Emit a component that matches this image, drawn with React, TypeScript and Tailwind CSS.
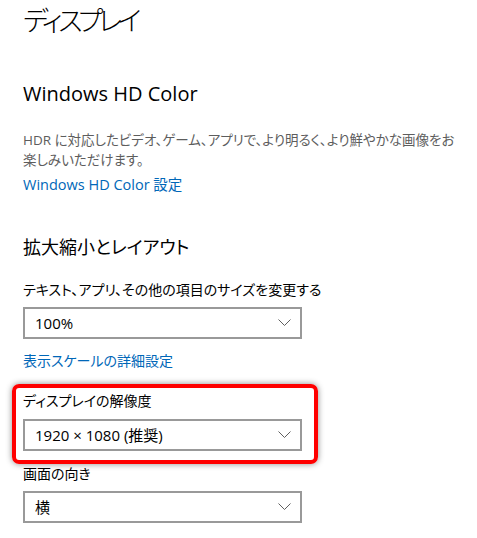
import React from "react";

const font = "font-['Open_Sans','Noto_Sans_CJK_JP',sans-serif] [font-feature-settings:'palt']";

function Chevron() {
  return (
    <svg width="13" height="8" viewBox="0 0 13 8" className="text-[#5f5f5f]">
      <polyline points="0.5,0.5 6.5,6.5 12.5,0.5" fill="none" stroke="currentColor" strokeWidth="1" />
    </svg>
  );
}

function Select({ value, className = "" }: { value: string; className?: string }) {
  return (
    <div
      className={`flex h-[32px] w-[279px] items-center justify-between border-2 border-[#999999] bg-white pl-[10px] pr-[9px] text-[15px] text-black ${className}`}
    >
      <span className="leading-[20px]">{value}</span>
      <Chevron />
    </div>
  );
}

export default function App() {
  return (
    <div className={`min-h-screen bg-white px-[23px] ${font}`}>
      {/* Page title */}
      <h1 className="text-[27px] font-light leading-[42px] tracking-[-4.5px] text-black">ディスプレイ</h1>

      {/* HDR */}
      <h2 className="mt-[38px] text-[20px] leading-[28px] text-black">Windows HD Color</h2>
      <p className="mt-[22px] whitespace-nowrap text-[13.5px] leading-[20px] text-[#5d5d5d]">
        HDR に対応したビデオ、ゲーム、アプリで、より明るく、より鮮やかな画像をお
        <br />
        楽しみいただけます。
      </p>
      <a href="#" className="mt-[5px] block text-[14.5px] leading-[20px] text-[#0067b8]">
        Windows HD Color 設定
      </a>

      {/* Scale and layout */}
      <h2 className="mt-[38px] text-[18px] leading-[28px] text-black">拡大縮小とレイアウト</h2>
      <div className="mt-[19px] text-[14px] leading-[20px] text-black">
        テキスト、アプリ、その他の項目のサイズを変更する
      </div>
      <Select value="100%" className="mt-[7px]" />
      <a href="#" className="mt-[12px] block text-[14px] leading-[20px] text-[#0067b8]">
        表示スケールの詳細設定
      </a>

      {/* highlighted resolution */}
      <div className="-ml-[11px] mt-[13px] w-[306px] rounded-[7px] border-4 border-[#ff0000] pb-[9px] pl-[7px] pt-[3px] shadow-[0_0_6px_rgba(0,0,0,0.45)]">
        <div className="text-[14px] leading-[20px] text-black">ディスプレイの解像度</div>
        <Select value="1920 × 1080 (推奨)" className="mt-[8px]" />
      </div>

      <div className="text-[14px] leading-[20px] text-black">画面の向き</div>
      <Select value="横" className="mt-[7px]" />
    </div>
  );
}
